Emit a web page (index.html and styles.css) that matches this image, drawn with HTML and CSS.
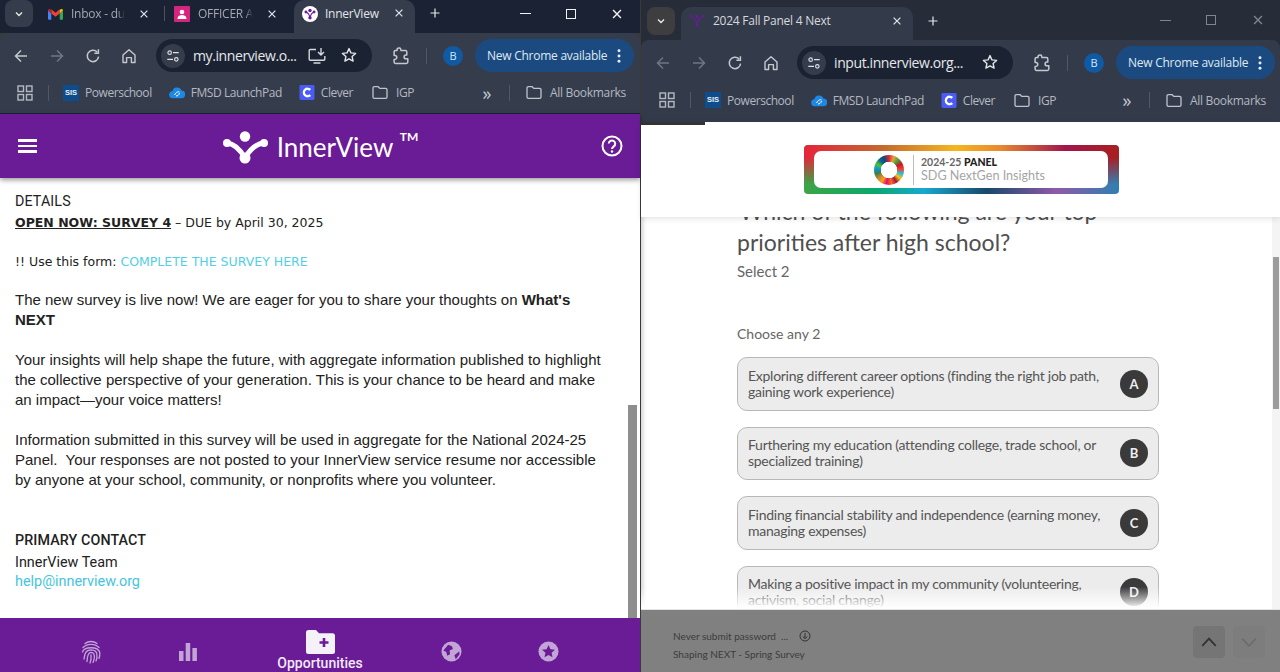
FILE: index.html
```html
<!DOCTYPE html>
<html lang="en">
<head>
<meta charset="utf-8">
<title>InnerView</title>
<link rel="stylesheet" href="styles.css">
</head>
<body>
<svg class="defs" width="0" height="0" aria-hidden="true">
  <symbol id="i-chev" viewBox="0 0 16 16"><path d="M4 6l4 4 4-4" fill="none" stroke="currentColor" stroke-width="1.8"/></symbol>
  <symbol id="i-x" viewBox="0 0 16 16"><path d="M3.5 3.5l9 9M12.5 3.5l-9 9" fill="none" stroke="currentColor" stroke-width="1.6"/></symbol>
  <symbol id="i-plus" viewBox="0 0 16 16"><path d="M8 2v12M2 8h12" fill="none" stroke="currentColor" stroke-width="1.6"/></symbol>
  <symbol id="i-back" viewBox="0 0 16 16"><path d="M14 8H2.5M8 2.5L2.5 8 8 13.5" fill="none" stroke="currentColor" stroke-width="1.5"/></symbol>
  <symbol id="i-fwd" viewBox="0 0 16 16"><path d="M2 8h11.5M8 2.5L13.5 8 8 13.5" fill="none" stroke="currentColor" stroke-width="1.5"/></symbol>
  <symbol id="i-reload" viewBox="0 0 16 16"><path d="M13.6 8.6A5.7 5.7 0 1 1 12 3.9M13.4 1.2v4h-4" fill="none" stroke="currentColor" stroke-width="1.5"/></symbol>
  <symbol id="i-home" viewBox="0 0 16 16"><path d="M2 7l6-5.3L14 7v7.5h-3.6V9.6H5.6v4.9H2z" fill="none" stroke="currentColor" stroke-width="1.4" stroke-linejoin="round"/></symbol>
  <symbol id="i-tune" viewBox="0 0 16 16"><g fill="none" stroke="currentColor" stroke-width="1.3"><circle cx="4.2" cy="4.2" r="2"/><path d="M8 4.2h6.5M1.5 11.8H8"/><circle cx="11.8" cy="11.8" r="2"/></g></symbol>
  <symbol id="i-install" viewBox="0 0 18 18"><g fill="none" stroke="currentColor" stroke-width="1.4"><path d="M8 2.5H2.2a1 1 0 0 0-1 1v8.7a1 1 0 0 0 1 1h13.6a1 1 0 0 0 1-1V9M5.5 16h7M13 1v6.5M10 5l3 3 3-3"/></g></symbol>
  <symbol id="i-star" viewBox="0 0 16 16"><path d="M8 1.6l1.9 4.3 4.7.5-3.5 3.1 1 4.6L8 11.8l-4.1 2.3 1-4.6L1.4 6.4l4.7-.5z" fill="none" stroke="currentColor" stroke-width="1.4" stroke-linejoin="round"/></symbol>
  <symbol id="i-ext" viewBox="0 0 18 18"><path d="M6 3.6V3a2 2 0 0 1 2-2h.6a1 1 0 0 1 .9.6l.5 2h4.4a1.4 1.4 0 0 1 1.4 1.4v3H15a1.9 1.9 0 1 0 0 3.8h1.8v3.200a1.400 1.400 0 0 1-1.400 1.400H4.500a1.400 1.400 0 0 1-1.400-1.400v-2.600h.8a1.900 1.900 0 1 0 0-3.800h-.8V5a1.400 1.400 0 0 1 1.400-1.400z" fill="none" stroke="currentColor" stroke-width="1.500" stroke-linejoin="round"/></symbol>
  <symbol id="i-dots" viewBox="0 0 4 16"><g fill="currentColor"><circle cx="2" cy="2" r="1.700"/><circle cx="2" cy="8" r="1.700"/><circle cx="2" cy="14" r="1.700"/></g></symbol>
  <symbol id="i-apps" viewBox="0 0 16 16"><g fill="none" stroke="currentColor" stroke-width="1.400"><rect x="1" y="1" width="5.500" height="5.500"/><rect x="9.500" y="1" width="5.500" height="5.500"/><rect x="1" y="9.500" width="5.500" height="5.500"/><rect x="9.500" y="9.500" width="5.500" height="5.500"/></g></symbol>
  <symbol id="i-folder" viewBox="0 0 16 14"><path d="M1 2.500A1.300 1.300 0 0 1 2.300 1.200h3.900l1.600 1.700h5.900A1.300 1.300 0 0 1 15 4.200v7.300a1.300 1.300 0 0 1-1.300 1.300H2.300A1.300 1.300 0 0 1 1 11.500z" fill="none" stroke="currentColor" stroke-width="1.300"/></symbol>
  <symbol id="i-cloud" viewBox="0 0 16 14"><path d="M4 12.800a3.500 3.500 0 0 1-.6-7A4.800 4.800 0 0 1 12.500 5a3.900 3.900 0 0 1-.3 7.800z" fill="#1e88e5"/><path d="M5.500 9.500c2-3.500 4-3.500 5-3M7 10.500c1.500 0 3-1 3.500-3" fill="none" stroke="#fff" stroke-width="1"/></symbol>
  <symbol id="i-clever" viewBox="0 0 16 16"><rect width="16" height="16" rx="1.500" fill="#4a5cf5"/><path d="M11.500 5.200a4 4 0 1 0 0 5.600" fill="none" stroke="#fff" stroke-width="2.400"/></symbol>
  <symbol id="i-ivtab" viewBox="0 0 16 16"><circle cx="8" cy="8" r="8" fill="#fff"/><g fill="#6a1b96"><circle cx="8" cy="4.500" r="1.700"/><circle cx="3.900" cy="6" r="1.400"/><circle cx="12.100" cy="6" r="1.400"/><circle cx="8" cy="11.800" r="1.700"/></g><path d="M3.900 6Q7 7 8 11.800 9 7 12.100 6" fill="none" stroke="#6a1b96" stroke-width="1.200"/></symbol>
</svg>

<div class="desktop">
  <section class="window win-left">
    <div class="tabstrip">
      <button class="tabsearch"><svg class="ic12"><use href="#i-chev"/></svg></button>
      <div class="tab tab-gmail">
        <svg class="favicon" viewBox="0 0 16 12"><path d="M0 2v9a1 1 0 0 0 1 1h2.500V5.500L0 2z" fill="#4285f4"/><path d="M16 2v9a1 1 0 0 1-1 1h-2.500V5.500L16 2z" fill="#34a853"/><path d="M3.500 5.500V1L8 4.700 12.500 1v4.500L8 8.800z" fill="#ea4335"/><path d="M0 2a1.500 1.500 0 0 1 2.500-1l1 .8v3.700z" fill="#c5221f"/><path d="M16 2a1.500 1.500 0 0 0-2.500-1l-1 .8v3.700z" fill="#fbbc04"/></svg>
        <span class="tabtitle t1">Inbox - du</span>
        <svg class="ic12 tabx"><use href="#i-x"/></svg>
      </div>
      <i class="tabsep"></i>
      <div class="tab tab-officer">
        <svg class="favicon16" viewBox="0 0 16 16"><rect width="16" height="16" rx="1" fill="#d6247f"/><circle cx="8" cy="6" r="2.300" fill="#fff"/><path d="M3.500 13c0-3 2-4 4.500-4s4.500 1 4.500 4z" fill="#fff"/></svg>
        <span class="tabtitle t2">OFFICER A</span>
        <svg class="ic12 tabx"><use href="#i-x"/></svg>
      </div>
      <div class="tab tab-active">
        <svg class="favicon16"><use href="#i-ivtab"/></svg>
        <span class="tabtitle t3">InnerView</span>
        <svg class="ic12 tabx"><use href="#i-x"/></svg>
      </div>
      <svg class="newtab"><use href="#i-plus"/></svg>
      <div class="winctrl">
        <span class="wc wc-min"></span>
        <span class="wc wc-max"></span>
        <svg class="wc-x"><use href="#i-x"/></svg>
      </div>
    </div>
    <div class="toolbar">
      <span class="tbtn"><svg class="ic16"><use href="#i-back"/></svg></span>
      <span class="tbtn off"><svg class="ic16"><use href="#i-fwd"/></svg></span>
      <span class="tbtn"><svg class="ic16"><use href="#i-reload"/></svg></span>
      <span class="tbtn"><svg class="ic16"><use href="#i-home"/></svg></span>
      <div class="omni">
        <span class="omni-tune"><svg class="ic14"><use href="#i-tune"/></svg></span>
        <span class="omni-url">my.innerview.o...</span>
        <svg class="omni-install"><use href="#i-install"/></svg>
        <svg class="omni-star"><use href="#i-star"/></svg>
      </div>
      <span class="tbtn ext"><svg class="ic18"><use href="#i-ext"/></svg></span>
      <i class="vsep"></i>
      <span class="avatar">B</span>
      <span class="update">New Chrome available<svg class="dots"><use href="#i-dots"/></svg></span>
    </div>
    <div class="bookmarks">
      <svg class="ic16 apps"><use href="#i-apps"/></svg>
      <i class="vsep bm-sep"></i>
      <span class="bm bm-first"><span class="sis">SIS</span>Powerschool</span>
      <span class="bm"><svg class="bmi"><use href="#i-cloud"/></svg>FMSD LaunchPad</span>
      <span class="bm"><svg class="bmi"><use href="#i-clever"/></svg>Clever</span>
      <span class="bm bm-folder"><svg class="bmi"><use href="#i-folder"/></svg>IGP</span>
      <span class="more">»</span>
      <i class="vsep"></i>
      <span class="bm bm-all"><svg class="bmi"><use href="#i-folder"/></svg>All Bookmarks</span>
    </div>
    <div class="iv-page">
      <header class="iv-head">
        <span class="burger"><i></i><i></i><i></i></span>
        <div class="iv-logo">
          <svg class="iv-mark" viewBox="0 0 46 33"><g fill="#fff"><circle cx="22" cy="5.500" r="5.200"/><circle cx="4" cy="12" r="4"/><circle cx="41" cy="12" r="4"/><circle cx="22" cy="27" r="5.500"/></g><path d="M4 12Q14 13 22 27 30 13 41 12" fill="none" stroke="#fff" stroke-width="5"/></svg>
          <span class="iv-name">InnerView<sup>TM</sup></span>
        </div>
        <svg class="iv-help" viewBox="0 0 22 22"><circle cx="11" cy="11" r="9.500" fill="none" stroke="#fff" stroke-width="2"/><path d="M7.800 8.600a3.200 3.200 0 1 1 5 2.700c-1 .7-1.800 1.300-1.800 2.700" fill="none" stroke="#fff" stroke-width="2"/><circle cx="11" cy="16.500" r="1.200" fill="#fff"/></svg>
      </header>
      <main class="iv-body">
        <h2 class="iv-h">DETAILS</h2>
        <p class="iv-small"><b class="iv-u">OPEN NOW: SURVEY 4</b> – DUE by April 30, 2025</p>
        <p class="iv-small iv-use">!! Use this form: <a class="iv-link">COMPLETE THE SURVEY HERE</a></p>
        <p class="iv-p">The new survey is live now! We are eager for you to share your thoughts on <b>What's NEXT</b></p>
        <p class="iv-p">Your insights will help shape the future, with aggregate information published to highlight the collective perspective of your generation. This is your chance to be heard and make an impact—your voice matters!</p>
        <p class="iv-p">Information submitted in this survey will be used in aggregate for the National 2024-25 Panel.&nbsp; Your responses are not posted to your InnerView service resume nor accessible by anyone at your school, community, or nonprofits where you volunteer.</p>
        <h2 class="iv-h iv-contact">PRIMARY CONTACT</h2>
        <p class="iv-c">InnerView Team</p>
        <p class="iv-c"><a class="iv-mail">help@innerview.org</a></p>
        <span class="iv-thumb"></span>
      </main>
      <nav class="iv-nav">
        <svg class="nav-ic n1" viewBox="0 0 20 24"><g fill="none" stroke="currentColor" stroke-width="1.300" stroke-linecap="round"><path d="M4 3.500C7.500 .8 12.500.8 16 3.500"/><path d="M2 7.500C6 3.200 14 3.200 18 7.500"/><path d="M1.500 12C3 6.500 17 6 18.800 12.500 19 15 18.500 17 18 18.500"/><path d="M3 19C3.500 14 4.500 10 10 9.800 14 9.800 16 12 16 15.500 16 18 15.500 20 15 21"/><path d="M6 21.500C6.500 18 6 12.500 10 12.300 13 12.300 13.500 15 13.300 18 13 20 12.500 21.500 12 22.500"/><path d="M9 23C10.500 20 10.200 17 10 14.800"/></g></svg>
        <svg class="nav-ic n2" viewBox="0 0 18 18"><g fill="currentColor"><rect x="0" y="8" width="4.500" height="10"/><rect x="6.700" y="0" width="4.500" height="18"/><rect x="13.400" y="5" width="4.500" height="13"/></g></svg>
        <div class="nav-active">
          <svg class="nav-folder" viewBox="0 0 29 24"><path d="M0 2.500A2.500 2.500 0 0 1 2.500 0h7.500l3 3.200h13.500A2.500 2.500 0 0 1 29 5.700v15.800a2.500 2.500 0 0 1-2.500 2.500h-24A2.500 2.500 0 0 1 0 21.500z" fill="#f5f1f9"/><path d="M18 8v9M13.500 12.500h9" stroke="#6a1b96" stroke-width="2.600"/></svg>
          <span>Opportunities</span>
        </div>
        <svg class="nav-ic n4" viewBox="0 0 22 22"><circle cx="11" cy="11" r="10.500" fill="currentColor"/><path d="M2.500 10l5-6 4 1.500 1 3-3.500 1.500.5 4-3 1.500-1-4zM14 15l5-4 .5 3-4 5z" fill="#6a1b96"/></svg>
        <svg class="nav-ic n5" viewBox="0 0 22 22"><circle cx="11" cy="11" r="10.500" fill="currentColor"/><path d="M11 4.200l2 4.500 4.800.5-3.600 3.200 1 4.700L11 14.700l-4.200 2.400 1-4.700-3.600-3.200 4.800-.5z" fill="#6a1b96"/></svg>
      </nav>
    </div>
  </section>

  <section class="window win-right">
    <div class="tabstrip">
      <button class="tabsearch"><svg class="ic12"><use href="#i-chev"/></svg></button>
      <div class="tab tab-active">
        <svg class="favicon16" viewBox="0 0 16 16"><g fill="#6a1b96"><circle cx="8" cy="3.500" r="1.500"/><circle cx="1.800" cy="3" r="1.300"/><circle cx="14.200" cy="3" r="1.300"/><circle cx="8" cy="12" r="1.700"/></g><path d="M2 3Q6.500 5 8 12 9.500 5 14 3" fill="none" stroke="#6a1b96" stroke-width="1.300"/></svg>
        <span class="tabtitle t4">2024 Fall Panel 4 Next</span>
        <svg class="ic12 tabx"><use href="#i-x"/></svg>
      </div>
      <svg class="newtab"><use href="#i-plus"/></svg>
      <div class="winctrl">
        <span class="wc wc-min"></span>
        <span class="wc wc-max"></span>
        <svg class="wc-x"><use href="#i-x"/></svg>
      </div>
    </div>
    <div class="toolbar">
      <span class="tbtn off"><svg class="ic16"><use href="#i-back"/></svg></span>
      <span class="tbtn off"><svg class="ic16"><use href="#i-fwd"/></svg></span>
      <span class="tbtn"><svg class="ic16"><use href="#i-reload"/></svg></span>
      <span class="tbtn"><svg class="ic16"><use href="#i-home"/></svg></span>
      <div class="omni">
        <span class="omni-tune"><svg class="ic14"><use href="#i-tune"/></svg></span>
        <span class="omni-url">input.innerview.org...</span>
        <svg class="omni-star"><use href="#i-star"/></svg>
      </div>
      <span class="tbtn ext"><svg class="ic18"><use href="#i-ext"/></svg></span>
      <i class="vsep"></i>
      <span class="avatar">B</span>
      <span class="update">New Chrome available<svg class="dots"><use href="#i-dots"/></svg></span>
    </div>
    <div class="bookmarks">
      <svg class="ic16 apps"><use href="#i-apps"/></svg>
      <i class="vsep bm-sep"></i>
      <span class="bm bm-first"><span class="sis">SIS</span>Powerschool</span>
      <span class="bm"><svg class="bmi"><use href="#i-cloud"/></svg>FMSD LaunchPad</span>
      <span class="bm"><svg class="bmi"><use href="#i-clever"/></svg>Clever</span>
      <span class="bm bm-folder"><svg class="bmi"><use href="#i-folder"/></svg>IGP</span>
      <span class="more">»</span>
      <i class="vsep"></i>
      <span class="bm bm-all"><svg class="bmi"><use href="#i-folder"/></svg>All Bookmarks</span>
    </div>
    <div class="sv-page">
      <i class="sv-load"></i>
      <header class="sv-head">
        <div class="sdg">
          <div class="sdg-inner">
            <span class="sdg-wheel"></span>
            <div class="sdg-text">
              <span class="sdg-1">2024-25 <b>PANEL</b></span>
              <span class="sdg-2">SDG NextGen Insights</span>
            </div>
          </div>
        </div>
      </header>
      <main class="sv-body">
        <div class="sv-col">
          <h1 class="sv-q">"Which of the following are your top priorities after high school?</h1>
          <p class="sv-sel">Select 2</p>
          <p class="sv-any">Choose any 2</p>
          <div class="sv-opts">
            <div class="opt"><span>Exploring different career options (finding the right job path, gaining work experience)</span><b class="key">A</b></div>
            <div class="opt"><span>Furthering my education (attending college, trade school, or specialized training)</span><b class="key">B</b></div>
            <div class="opt"><span>Finding financial stability and independence (earning money, managing expenses)</span><b class="key">C</b></div>
            <div class="opt"><span>Making a positive impact in my community (volunteering, activism, social change)</span><b class="key">D</b></div>
          </div>
        </div>
        <i class="sv-fade"></i>
        <span class="sv-track"><i class="sv-thumb"></i></span>
      </main>
      <footer class="sv-foot">
        <div class="sv-notes">
          <span class="sv-note">Never submit password &nbsp;...<svg class="sv-dl" viewBox="0 0 12 12"><circle cx="6" cy="6" r="5" fill="none" stroke="#333" stroke-width="1"/><path d="M6 3v5.500M3.800 6.500L6 8.700l2.200-2.200" fill="none" stroke="#333" stroke-width="1"/></svg></span>
          <span class="sv-note">Shaping NEXT - Spring Survey</span>
        </div>
        <button class="sv-btn up"><svg viewBox="0 0 16 16"><path d="M2 11.500L8 5l6 6.500" fill="none" stroke="#333" stroke-width="1.600"/></svg></button>
        <button class="sv-btn down"><svg viewBox="0 0 16 16"><path d="M2 5l6 6.500L14 5" fill="none" stroke="#6b6b6b" stroke-width="1.400"/></svg></button>
      </footer>
    </div>
  </section>
</div>
</body>
</html>
```
FILE: styles.css
```css
* { box-sizing: border-box; }
html, body { margin: 0; height: 100%; overflow: hidden; background: #3a3a3a; }
.defs { position: absolute; }
button { border: 0; padding: 0; font: inherit; }
p, h1, h2 { margin: 0; font-weight: normal; }
i { display: block; }
svg { display: block; flex: none; }

.desktop { display: flex; width: 1280px; height: 672px; gap: 1px; font-family: "Open Sans", "Noto Sans", sans-serif; }
.window { display: flex; flex-direction: column; height: 672px; color: #c7cad0; }
.win-left { width: 640px; --strip: #1a2233; --bar: #353d4d; }
.win-right { width: 639px; padding-top: 1px; --strip: #262c38; --bar: #333b4a; background: #262c38; }

.ic12 { width: 12px; height: 12px; }
.ic14 { width: 14px; height: 14px; }
.ic16 { width: 16px; height: 16px; }
.ic18 { width: 18px; height: 18px; }

/* tab strip */
.tabstrip { display: flex; align-items: flex-start; height: 33px; background: var(--strip); flex: none; }
.win-right .tabstrip { height: 39px; padding-top: 6px; }
.tabsearch { width: 28px; height: 27px; margin-left: 5px; border-radius: 8px; background: #353d4d; color: #e8e8e8; display: flex; align-items: center; justify-content: center; }
.win-right .tabsearch { margin-left: 6px; height: 28px; background: #3e3e40; }
.tab { display: flex; align-items: center; height: 27px; position: relative; }
.tabtitle { font-size: 12px; letter-spacing: -.25px; white-space: nowrap; }
.tab-gmail { margin-left: 15px; width: 111px; }
.favicon { width: 15px; height: 12px; }
.favicon16 { width: 16px; height: 16px; }
.t1 { margin-left: 8px; color: #a4a8b0; -webkit-mask-image: linear-gradient(90deg, #000 85%, transparent); mask-image: linear-gradient(90deg, #000 85%, transparent); }
.t2 { margin-left: 8px; color: #a4a8b0; -webkit-mask-image: linear-gradient(90deg, #000 85%, transparent); mask-image: linear-gradient(90deg, #000 85%, transparent); }
.t3 { margin-left: 7px; color: #e2e4e8; }
.t4 { margin-left: 8px; color: #d6d8dc; }
.tabx { position: absolute; color: #e4e6ea; }
.tab-gmail .tabx { left: 90px; }
.tabsep { width: 1px; height: 15px; margin: 6px 0 0 5px; background: #4a5160; }
.tab-officer { margin-left: 9px; width: 120px; }
.tab-officer .tabx { left: 92px; }
.tab-active { height: 33px; background: var(--bar); border-radius: 10px 10px 0 0; padding: 0 0 6px 8px; }
.win-left .tab-active { width: 121px; }
.win-left .tab-active .tabx { left: 99px; top: 7px; }
.win-right .tab-active { margin-left: 6px; width: 232px; height: 33px; padding-left: 8px; padding-bottom: 6px; }
.win-right .tab-active .tabx { left: 210px; top: 8px; }
.newtab { width: 12px; height: 12px; margin: 7px 0 0 14px; color: #e6e8ec; }
.win-right .newtab { margin: 8px 0 0 14px; }
.winctrl { display: flex; align-items: center; margin-left: auto; color: #f2f2f2; height: 27px; }
.wc { display: block; }
.wc-min { width: 11px; height: 1px; background: currentColor; margin-right: 35px; }
.wc-max { width: 10px; height: 10px; border: 1.300px solid currentColor; margin-right: 34px; }
.wc-x { width: 14px; height: 14px; margin-right: 16px; }
.win-right .winctrl { color: #7f848d; height: 26px; }
.win-right .wc-min { margin-right: 35px; }
.win-right .wc-max { margin-right: 35px; }
.win-right .wc-x { margin-right: 15px; }

/* toolbar */
.toolbar { display: flex; align-items: center; height: 45px; padding-left: 3px; background: var(--bar); flex: none; }
.win-right .toolbar { padding-left: 4px; border-radius: 8px 8px 0 0; }
.win-left .toolbar { border-top-right-radius: 8px; border-top-left-radius: 8px; }
.tbtn { width: 36px; display: flex; justify-content: center; color: #c5c8ce; }
.tbtn.off { color: #707683; }
.omni { display: flex; align-items: center; width: 216px; height: 33px; margin-left: 9px; border-radius: 17px; background: #1b2333; padding-left: 5px; position: relative; }
.win-right .omni { margin-left: 8px; }
.omni-tune { display: flex; align-items: center; justify-content: center; width: 24px; height: 24px; border-radius: 50%; background: #353d4d; color: #dfe1e5; }
.omni-url { margin-left: 8px; font-size: 14px; letter-spacing: -.4px; color: #e5e7ea; white-space: nowrap; }
.omni-install { position: absolute; left: 152px; top: 8px; width: 18px; height: 18px; color: #d5d7dc; }
.omni-star { position: absolute; left: 185px; top: 8px; width: 16px; height: 16px; color: #e2e4e8; }
.ext { margin-left: 10px; }
.vsep { width: 1px; height: 16px; background: #505766; flex: none; }
.toolbar .vsep { margin-left: 8px; }
.avatar { width: 20px; height: 20px; margin-left: 16px; border-radius: 50%; background: #0f5aa3; color: #d6e6f6; font-size: 11px; text-align: center; line-height: 20px; }
.update { display: flex; align-items: center; width: 159px; height: 33px; margin-left: 12px; padding-left: 12px; border-radius: 17px; background: #1a4a80; color: #dfe8f2; font-size: 12px; letter-spacing: -.25px; white-space: nowrap; position: relative; }
.dots { width: 4px; height: 14px; position: absolute; left: 142px; top: 10px; color: #e8edf3; }

/* bookmarks */
.bookmarks { display: flex; align-items: center; height: 35px; padding: 0 0 6px 17px; background: var(--bar); font-size: 12px; letter-spacing: -.45px; color: #b4b8c0; flex: none; }
.win-right .bookmarks { padding: 0 0 7px 18px; height: 37px; }
.apps { color: #b4b8c0; }
.bm-sep { margin-left: 15px; }
.bm { display: flex; align-items: center; gap: 6px; margin-left: 17px; white-space: nowrap; }
.bm-first { margin-left: 14px; }
.bm-folder { margin-left: 19px; gap: 8px; }
.bmi { width: 16px; height: 15px; color: #c0c3ca; }
.sis { width: 16px; height: 16px; background: #0f4c8c; color: #e8eff7; font: bold 7.500px/16px "Liberation Sans", sans-serif; letter-spacing: 0; text-align: center; }
.more { margin-left: auto; margin-right: 18px; font-size: 18px; line-height: 16px; color: #c5c8ce; }
.bm-all { margin-left: 16px; margin-right: 14px; gap: 8px; letter-spacing: -.3px; }
.bookmarks .vsep { height: 16px; }

/* InnerView page */
.iv-page { flex: 1; min-height: 0; display: flex; flex-direction: column; border-top: 1px solid #1a2233; background: #fff; position: relative; }
.iv-head { height: 64px; flex: none; display: flex; align-items: center; justify-content: space-between; padding: 0 17px 0 18px; background: #6a1b96; box-shadow: 0 2px 5px rgba(0,0,0,.4); position: relative; z-index: 2; }
.burger { display: flex; flex-direction: column; gap: 3px; width: 19px; }
.burger i { height: 2.500px; background: #fff; }
.iv-logo { display: flex; align-items: center; gap: 8px; margin: 2px 0 0 3px; }
.iv-mark { width: 46px; height: 33px; }
.iv-name { font: 26px/1 "Lato", sans-serif; color: #fff; position: relative; padding-right: 25px; }
.iv-name sup { position: absolute; right: 0; top: -3px; font-size: 12px; line-height: 1; font-weight: 700; }
.iv-help { width: 22px; height: 22px; }
.iv-body { flex: 1; min-height: 0; overflow: hidden; padding: 15px 15px 0; color: #222; position: relative; }
.iv-h { font: 14.300px/17px "Roboto", sans-serif; letter-spacing: .1px; color: #222; }
.iv-small { font: 12.500px/17px "DejaVu Sans", sans-serif; margin-top: 4px; }
.iv-u { text-decoration: underline; }
.iv-use { margin-top: 22px; }
.iv-link { color: #52cfe6; }
.iv-p { font: 15px/20px "Liberation Sans", sans-serif; margin-top: 20px; width: 596px; }
.iv-contact { font-weight: 500; margin-top: 42px; }
.iv-c { font: 14.400px/20px "Roboto", sans-serif; margin-top: 4px; }
.iv-c + .iv-c { margin-top: -1px; }
.iv-mail { color: #45c4e0; }
.iv-thumb { position: absolute; left: 628px; top: 227px; width: 9px; height: 213px; background: #8e8e8e; }
.iv-nav { height: 54px; flex: none; display: flex; align-items: flex-start; background: #6a1b96; color: #c2a5d6; position: relative; }
.nav-ic { margin-top: 22px; }
.n1 { width: 20px; height: 24px; margin-left: 81px; }
.n2 { width: 18px; height: 18px; margin-left: 78px; margin-top: 25px; }
.nav-active { display: flex; flex-direction: column; align-items: center; width: 90px; margin-left: 78px; margin-top: 12px; color: #f2e9f7; font: 500 14px/16px "Roboto", sans-serif; }
.nav-active span { margin-top: 1px; }
.nav-folder { width: 29px; height: 24px; }
.n4 { width: 21px; height: 21px; margin-left: 76px; margin-top: 23px; }
.n5 { width: 21px; height: 21px; margin-left: 76px; margin-top: 23px; }

/* Survey page */
.sv-page { flex: 1; min-height: 0; display: flex; flex-direction: column; background: #fff; position: relative; }
.sv-load { position: absolute; left: 0; top: 0; width: 64px; height: 3px; background: #333; z-index: 3; }
.sv-head { height: 95px; flex: none; display: flex; justify-content: center; align-items: flex-start; padding: 23px 0 0 2px; background: #fff; box-shadow: 0 2px 6px rgba(0,0,0,.1); position: relative; z-index: 2; }
.sdg { width: 315px; height: 49px; padding: 6px 11px 6px 10px; border-radius: 4px; position: relative; background: linear-gradient(90deg, #3ea447, #0aa86b 22%, #17a9d0 38%, #19486a 58%, #8f5aa8 80%, #2f7fb0 100%); }
.sdg::before { content: ""; position: absolute; inset: 0; border-radius: 4px; background: linear-gradient(90deg, #e5243b, #c5692d 25%, #f5b51f 48%, #e98a2e 62%, #a2154b 83%, #a8201f 100%); -webkit-mask-image: linear-gradient(#000 25%, transparent 80%); mask-image: linear-gradient(#000 25%, transparent 80%); }
.sdg-inner { display: flex; align-items: center; justify-content: flex-start; height: 37px; border-radius: 7px; background: #fff; padding-left: 60px; position: relative; }
.sdg-wheel { width: 30px; height: 30px; border-radius: 50%; background: radial-gradient(circle, #fff 8px, transparent 8.500px), conic-gradient(#e5243b, #dda63a, #4c9f38, #c5192d, #ff3a21, #26bde2, #fcc30b, #a21942, #fd6925, #dd1367, #fd9d24, #bf8b2e, #3f7e44, #0a97d9, #56c02b, #00689d, #19486a, #e5243b); flex: none; }
.sdg-text { display: flex; flex-direction: column; margin-left: 9px; padding-left: 7px; border-left: 1px solid #bbb; height: 30px; justify-content: center; font-family: "Lato", sans-serif; white-space: nowrap; }
.sdg-1 { font-size: 10.500px; line-height: 12px; font-weight: 700; color: #666; }
.sdg-1 b { color: #222; font-weight: 900; }
.sdg-2 { font-size: 12.600px; line-height: 15px; color: #a5a5a5; }
.sv-body { flex: 1; min-height: 0; overflow: hidden; position: relative; box-shadow: inset 5px 0 4px -3px rgba(0,0,0,.18); }
.sv-col { width: 422px; margin: -21px 0 0 96px; font-family: "Lato", "Noto Sans", sans-serif; color: #555; }
.sv-q { font-size: 23px; line-height: 31px; width: 400px; color: #505050; text-indent: -6px; }
.sv-sel { font-size: 15px; line-height: 20px; margin-top: 3px; color: #666; }
.sv-any { font-size: 14px; line-height: 20px; margin-top: 43px; color: #666; }
.sv-opts { display: flex; flex-direction: column; gap: 16px; margin-top: 13px; }
.opt { display: flex; align-items: center; justify-content: space-between; flex: none; height: 53.500px; padding: 0 10px; border: 1px solid #b8b8b8; border-radius: 10px; background: #ececec; font-size: 14px; letter-spacing: -.27px; line-height: 16px; color: #555; }
.opt span { width: 362px; }
.key { width: 28px; height: 28px; flex: none; border-radius: 50%; background: #3a3a3a; color: #eee; font-size: 13px; letter-spacing: 0; line-height: 28px; text-align: center; }
.sv-fade { position: absolute; left: 0; right: 8px; bottom: 0; height: 22px; background: linear-gradient(rgba(255,255,255,0), #fff); }
.sv-track { position: absolute; right: 0; top: 0; bottom: 0; width: 8px; background: #f4f4f4; }
.sv-thumb { position: absolute; left: 1px; top: 40px; width: 6px; height: 152px; background: #9c9c9c; }
.sv-foot { height: 63px; flex: none; display: flex; background: #808080; border-top: 1px solid #e4e4e4; position: relative; }
.sv-notes { display: flex; flex-direction: column; gap: 7px; padding: 20px 0 0 32px; flex: 1; font-family: "Lato", sans-serif; font-size: 10px; line-height: 11px; color: #3c3c3c; }
.sv-note { display: flex; align-items: center; white-space: nowrap; }
.sv-dl { width: 12px; height: 12px; margin-left: 11px; }
.sv-btn { width: 32px; height: 32px; margin-top: 16px; border-radius: 4px; display: flex; align-items: center; justify-content: center; }
.sv-btn svg { width: 18px; height: 18px; }
.up { background: #757575; margin-right: 8px; }
.down { background: #7d7d7d; margin-right: 15px; }
```
